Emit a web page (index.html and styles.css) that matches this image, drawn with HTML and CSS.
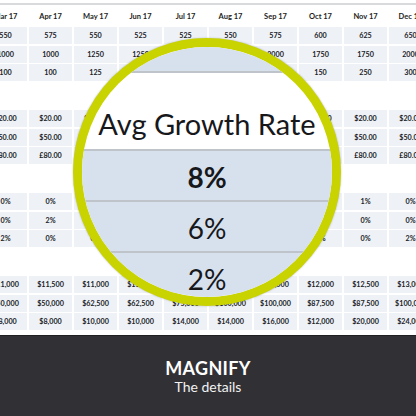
FILE: index.html
```html
<!DOCTYPE html>
<html lang="en">
<head>
    <meta charset="UTF-8">
    <title>Magnify the details</title>
    <link rel="stylesheet" href="styles.css">
</head>
<body>
    <div class="sheet">
        <div class="sheet-rule"></div>

        <div class="grid head">
            <div>Mar 17</div><div>Apr 17</div><div>May 17</div><div>Jun 17</div><div>Jul 17</div>
            <div>Aug 17</div><div>Sep 17</div><div>Oct 17</div><div>Nov 17</div><div>Dec 17</div>
        </div>

        <div class="grid group">
            <div>550</div><div>575</div><div>550</div><div>525</div><div>525</div><div>550</div><div>575</div><div>600</div><div>625</div><div>650</div>
            <div>1000</div><div>1000</div><div>1250</div><div>1250</div><div>1500</div><div>1750</div><div>2000</div><div>1750</div><div>1750</div><div>2000</div>
            <div>100</div><div>100</div><div>125</div><div>125</div><div>150</div><div>150</div><div>150</div><div>150</div><div>250</div><div>300</div>
        </div>

        <div class="grid group">
            <div>$20.00</div><div>$20.00</div><div>$20.00</div><div>$20.00</div><div>$20.00</div><div>$20.00</div><div>$20.00</div><div>$20.00</div><div>$20.00</div><div>$20.00</div>
            <div>$50.00</div><div>$50.00</div><div>$50.00</div><div>$50.00</div><div>$50.00</div><div>$50.00</div><div>$50.00</div><div>$50.00</div><div>$50.00</div><div>$50.00</div>
            <div>£80.00</div><div>£80.00</div><div>£80.00</div><div>£80.00</div><div>£80.00</div><div>£80.00</div><div>£80.00</div><div>£80.00</div><div>£80.00</div><div>£80.00</div>
        </div>

        <div class="grid group">
            <div>0%</div><div>0%</div><div>1%</div><div>0%</div><div>2%</div><div>0%</div><div>1%</div><div>0%</div><div>1%</div><div>0%</div>
            <div>0%</div><div>2%</div><div>0%</div><div>1%</div><div>0%</div><div>2%</div><div>0%</div><div>1%</div><div>0%</div><div>0%</div>
            <div>2%</div><div>0%</div><div>0%</div><div>2%</div><div>0%</div><div>0%</div><div>2%</div><div>0%</div><div>0%</div><div>2%</div>
        </div>

        <div class="grid group">
            <div>$11,000</div><div>$11,500</div><div>$11,000</div><div>$11,500</div><div>$12,000</div><div>$12,000</div><div>$12,000</div><div>$12,000</div><div>$12,500</div><div>$13,000</div>
            <div>$50,000</div><div>$50,000</div><div>$62,500</div><div>$62,500</div><div>$75,000</div><div>$100,000</div><div>$100,000</div><div>$87,500</div><div>$87,500</div><div>$100,000</div>
            <div>$8,000</div><div>$8,000</div><div>$10,000</div><div>$10,000</div><div>$14,000</div><div>$14,000</div><div>$16,000</div><div>$12,000</div><div>$20,000</div><div>$24,000</div>
        </div>

        <!-- magnifying glass over the sheet -->
        <div class="lens">
            <div class="lens-band"></div>
            <div class="lens-title">Avg Growth Rate</div>
            <div class="lens-row strong">8%</div>
            <div class="lens-row">6%</div>
            <div class="lens-row">2%</div>
        </div>
    </div>

    <footer class="caption">
        <h2>MAGNIFY</h2>
        <p>The details</p>
    </footer>
</body>
</html>
```

FILE: styles.css
```css
html, body {
    margin: 0;
    padding: 0;
    background: #ffffff;
}

body {
    width: 416px;
    height: 416px;
    overflow: hidden;
    font-family: 'Lato', 'Noto Sans', sans-serif;
    display: flex;
    flex-direction: column;
}

.sheet {
    position: relative;
    height: 335px;
    padding-top: 3px;
    box-sizing: border-box;
    display: flex;
    flex-direction: column;
    align-items: center;
    overflow: hidden;
}

.sheet-rule {
    width: 100%;
    height: 2px;
    background: #d9dadc;
    flex: none;
}

.grid {
    display: grid;
    grid-template-columns: repeat(10, 43px);
    column-gap: 2px;
    row-gap: 1.5px;
    flex: none;
}

.grid > div {
    height: 17px;
    display: flex;
    align-items: center;
    justify-content: center;
    font-size: 7.2px;
    font-weight: 700;
    color: #222327;
    white-space: nowrap;
}

.head {
    height: 22px;
    align-items: center;
}

.head > div {
    font-size: 7.5px;
    color: #1d1e22;
}

.group > div {
    background: #eef2f7;
}

.group + .group {
    margin-top: 29px;
}

.lens {
    position: absolute;
    left: 73px;
    top: 38px;
    width: 268px;
    height: 268px;
    box-sizing: border-box;
    border: 9px solid #c9d300;
    border-radius: 50%;
    overflow: hidden;
    background: #ffffff;
    box-shadow: 0 0 2px rgba(0, 0, 0, 0.25);
    display: flex;
    flex-direction: column;
}

.lens-band {
    height: 26px;
    flex: none;
    box-sizing: border-box;
    background: #d7e1ee;
    border-bottom: 2px solid #bfc3ca;
}

.lens-title {
    height: 78px;
    flex: none;
    display: flex;
    align-items: flex-end;
    justify-content: center;
    padding-bottom: 8px;
    box-sizing: border-box;
    font-size: 29px;
    font-weight: 400;
    color: #17181b;
    border-bottom: 2px solid #bfc3ca;
}

.lens-row {
    height: 51px;
    flex: none;
    box-sizing: border-box;
    display: flex;
    align-items: center;
    justify-content: center;
    padding-top: 3px;
    background: #d7e1ee;
    border-bottom: 2px solid #bfc3ca;
    font-size: 28px;
    font-weight: 400;
    color: #17181b;
}

.lens-row.strong {
    font-weight: 700;
}

.caption {
    flex: 1;
    background: #313135;
    border-top: 1px solid #1f1f22;
    color: #ffffff;
    text-align: center;
    padding-top: 22px;
    box-sizing: border-box;
}

.caption h2 {
    margin: 0;
    font-size: 18px;
    font-weight: 700;
    line-height: 20px;
    letter-spacing: 0.3px;
}

.caption p {
    margin: 0;
    font-size: 14px;
    line-height: 18px;
    color: #f2f2f2;
}
```
